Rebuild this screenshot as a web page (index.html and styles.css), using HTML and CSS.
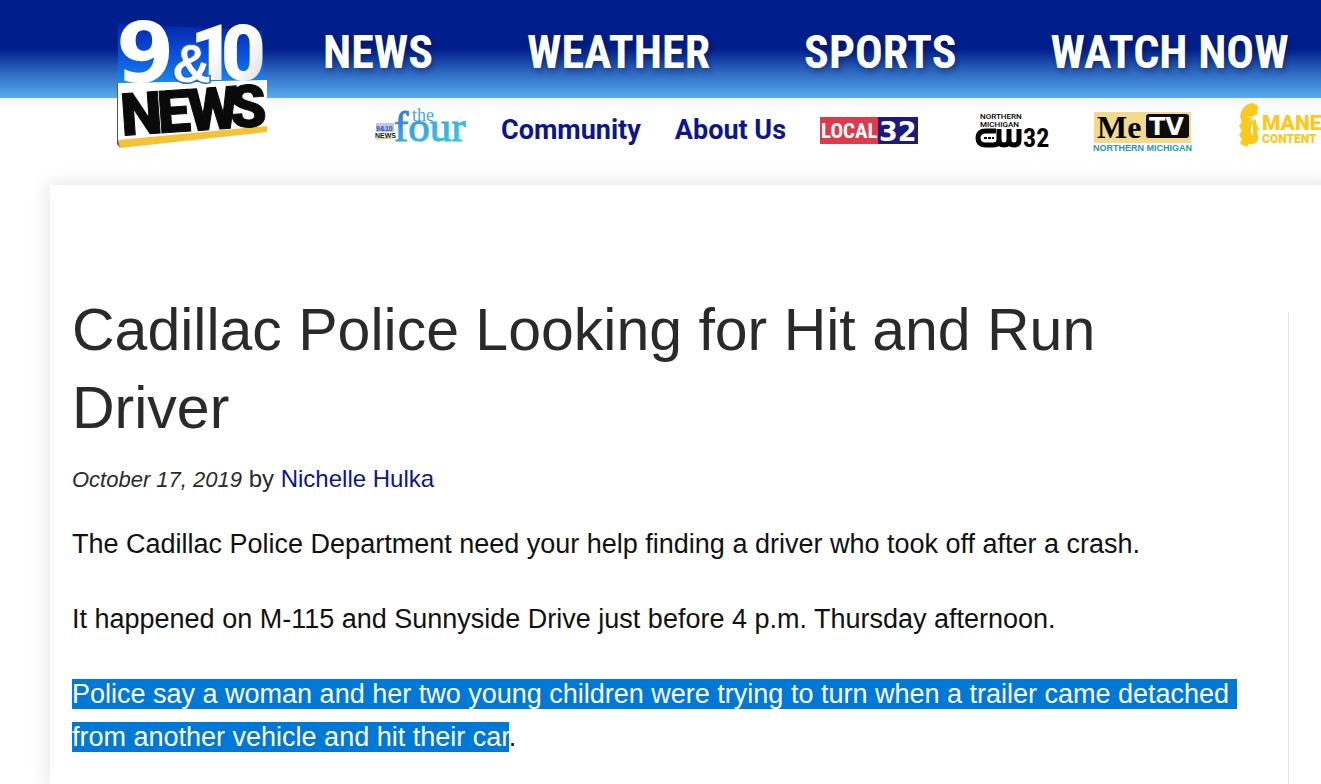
FILE: index.html
```html
<!DOCTYPE html>
<html lang="en">
<head>
    <meta charset="UTF-8" />
    <title>Cadillac Police Looking for Hit and Run Driver</title>
    <link rel="stylesheet" href="styles.css">
</head>
<body>
    <header class="topbar">
      <a href="#" class="logo" aria-label="9&amp;10 News">
        <svg width="154" height="136" viewBox="0 0 154 136">
          <defs>
            <linearGradient id="panel" x1="0" y1="0" x2="0" y2="1">
              <stop offset="0" stop-color="#0526a8" />
              <stop offset="0.5" stop-color="#0a50dc" />
              <stop offset="1" stop-color="#1a94ee" />
            </linearGradient>
            <linearGradient id="chrome" x1="0" y1="0" x2="1" y2="1">
              <stop offset="0.5" stop-color="#ffffff" />
              <stop offset="1" stop-color="#cfcfd4" />
            </linearGradient>
          </defs>
          <path d="M2 8 L146 16 L148 68 L2 72 Z" fill="url(#panel)" />
          <path d="M2 68 L151 65 L151 112 L2 126 Z" fill="#ffffff" />
          <path d="M2 125 L151 111 L151 117 L4 133 L2 129 Z" fill="#f5c235" />
          <path d="M1 68 L2 68 L2 126 L4 133 L1 129 Z" fill="#55565c" />
          <g class="logo-num">
            <text x="0" y="67" class="nine" fill="#ffffff">9</text>
            <text x="74" y="65" class="ten" fill="url(#chrome)">1</text>
            <text x="105" y="65" class="ten" fill="url(#chrome)">0</text>
            <text x="56" y="67" font-size="54" fill="#ffffff" stroke="#1663d8" stroke-width="3" paint-order="stroke">&amp;</text>
          </g>
          <g class="logo-news" transform="rotate(-4 4 122)">
            <text x="6 43 73 115" y="121">NEWS</text>
          </g>
        </svg>
      </a>
      <nav class="topnav">
        <a href="#">NEWS</a>
        <a href="#">WEATHER</a>
        <a href="#">SPORTS</a>
        <a href="#">WATCH NOW</a>
      </nav>
    </header>

    <nav class="subnav">
      <a href="#" aria-label="the four">
        <svg width="93" height="44" viewBox="0 0 93 44">
          <defs>
            <linearGradient id="four" x1="0" y1="0" x2="1" y2="1">
              <stop offset="0" stop-color="#2a63d8" />
              <stop offset="0.4" stop-color="#35a4e4" />
              <stop offset="1" stop-color="#35d0e6" />
            </linearGradient>
          </defs>
          <rect x="2" y="19" width="18" height="9" fill="#b9c8ee" />
          <text x="2" y="27" class="tiny" fill="#3a50a8">9&amp;10</text>
          <text x="1" y="34" class="tiny" fill="#111111">NEWS</text>
          <path d="M2 35 L19 34" stroke="#e9c04a" />
          <text x="20" y="37" class="four" fill="url(#four)" stroke="url(#four)">four</text>
          <text x="38" y="17" class="the" fill="#3fa9dd">the</text>
        </svg>
      </a>
      <a href="#">Community</a>
      <a href="#">About Us</a>
      <a href="#" aria-label="Local 32">
        <svg width="98" height="44" viewBox="0 0 98 44">
          <rect x="0" y="13" width="58" height="27" fill="#e0394b" />
          <rect x="58" y="13" width="40" height="27" fill="#1c1a80" />
          <text x="1" y="34" class="local">LOCAL</text>
          <text x="59" y="37" class="local-num">32</text>
        </svg>
      </a>
      <a href="#" class="cw" aria-label="Northern Michigan CW 32">
        <svg width="74" height="44" viewBox="0 0 74 44">
          <text x="4" y="15" class="north">NORTHERN</text>
          <text x="4" y="23" class="north">MICHIGAN</text>
          <g fill="none" stroke="#000000" stroke-width="5">
            <path d="M20 27 H10 Q2 27 2 34 Q2 41 10 41 H17 Q23 41 23 36 V25" />
            <path d="M23 36 Q23 41 28 41 Q33 41 33 36 V25 M33 36 Q33 41 38 41 Q43 41 43 36 V25" />
          </g>
          <path d="M8 34 H18" stroke="#000000" stroke-width="2" stroke-dasharray="3 1" />
          <text x="47" y="43" class="cw-num">32</text>
        </svg>
      </a>
      <a href="#" class="metv" aria-label="MeTV Northern Michigan">
        <svg width="100" height="48" viewBox="0 0 100 48">
          <rect x="1" y="8" width="97" height="31" fill="#f2d98b" />
          <rect x="53" y="10" width="43" height="24" rx="3" fill="#0d0d0d" />
          <text x="4" y="34" class="me">Me</text>
          <text x="56" y="31" class="tv">TV</text>
          <text x="0" y="47" class="metv-sub">NORTHERN MICHIGAN</text>
        </svg>
      </a>
      <a href="#" class="mane" aria-label="Mane Content">
        <svg width="100" height="48" viewBox="0 0 100 48">
          <path d="M2 8 Q6 -1 14 -1 L19 2 L18 10 L13 13 L14 19 L12 24 L13 31 L19 31 L19 36 Q17 41 10 40 L8 43 L1 40 L3 35 L0 31 L3 27 L0 22 L3 18 L1 13 Z" fill="#fbc91c" />
          <path d="M14 17 L17 15 L17 19 L20 25 L18 27 L19 32 L14 31 Z" fill="#fbc91c" />
          <path d="M8 12 L13 14 L10 18 M13 20 L12 28" fill="none" stroke="#fff1b8" stroke-width="1" />
          <text x="23" y="26" class="mane-big">MANE</text>
          <text x="23" y="39" class="mane-small">CONTENT</text>
        </svg>
      </a>
    </nav>

    <main class="page">
      <article class="story">
        <h1>Cadillac Police Looking for Hit and Run Driver</h1>
        <p class="byline"><em>October 17, 2019</em> by <a href="#">Nichelle Hulka</a></p>
        <p>The Cadillac Police Department need your help finding a driver who took off after a crash.</p>
        <p>It happened on M-115 and Sunnyside Drive just before 4 p.m. Thursday afternoon.</p>
        <p><mark>Police say a woman and her two young children were trying to turn when a trailer came detached&nbsp;</mark><br><mark>from another vehicle and hit their car</mark>.</p>
      </article>
      <aside class="sidebar"></aside>
    </main>
</body>
</html>
```
FILE: styles.css
```css
body {
  display: flex;
  flex-direction: column;
  min-height: 100vh;
  margin: 0;
  background-color: #ffffff;
  font-family: "Liberation Sans", Arial, sans-serif;
  color: #111111;
  overflow-x: hidden;
}

a {
  color: #0c1590;
  text-decoration: none;
}

/* Blue bar on top */
.topbar {
  display: flex;
  height: 98px;
  padding-left: 116px;
  background: linear-gradient(#001f8c 50%, #2a63bd 72%, #5aabf2);
}

.logo {
  flex: none;
  height: 136px;
  margin-top: 15px;
  z-index: 1;
}

.logo svg {
  overflow: visible;
}

.logo-num {
  font-family: "Liberation Sans", Arial, sans-serif;
  font-weight: bold;
}

.nine {
  font: bold 84px "DejaVu Sans", sans-serif;
}

.ten {
  font: 900 77px Roboto, sans-serif;
}

.logo-news {
  font-family: Roboto, sans-serif;
  font-size: 59px;
  font-weight: 900;
  fill: #0a0a0a;
  stroke: #0a0a0a;
  stroke-width: 1px;
}

.topnav {
  display: flex;
  gap: 94px;
  margin-left: 53px;
  padding-top: 20px;
}

.topnav a {
  color: #ffffff;
  font-family: "Roboto Condensed", Roboto, sans-serif;
  font-size: 46px;
  font-weight: bold;
  line-height: 64px;
  white-space: nowrap;
  text-shadow: 2px 3px 6px rgba(0, 0, 0, 0.3);
}

/* Second row of links */
.subnav {
  display: flex;
  align-items: flex-start;
  gap: 34px;
  height: 87px;
  padding-left: 374px;
  background: linear-gradient(#f4f8fc, #ffffff 16px);
}

.subnav a {
  flex: none;
  padding-top: 6px;
  font-family: Roboto, sans-serif;
  font-size: 27px;
  font-weight: bold;
  line-height: 52px;
}

.subnav svg {
  display: block;
  overflow: visible;
}

.subnav .cw {
  margin-left: 24px;
}

.subnav .metv {
  margin-left: 9px;
}

.subnav .mane {
  margin-left: 12px;
}

.tiny {
  font: bold 7px "Liberation Sans", Arial, sans-serif;
}

.four {
  font: 43px "Liberation Serif", serif;
}

.the {
  font: 18px "Liberation Serif", serif;
}

.local {
  font: bold 21px "Roboto Condensed", Roboto, sans-serif;
  fill: #ffffff;
}

.local-num {
  font: bold 27px "DejaVu Sans", sans-serif;
  fill: #ffffff;
}

.north {
  font: 500 8px Roboto, sans-serif;
}

.cw-num {
  font: bold 26px "Roboto Condensed", Roboto, sans-serif;
}

.me {
  font: bold 32px "Liberation Serif", serif;
}

.tv {
  font: bold 24px "DejaVu Sans", sans-serif;
  fill: #ffffff;
}

.metv-sub {
  font: bold 9px "Liberation Sans", Arial, sans-serif;
  fill: #2496b4;
}

.mane-big {
  font: 900 21px Roboto, sans-serif;
  fill: #fbc91c;
}

.mane-small {
  font: 900 12px Roboto, sans-serif;
  fill: #fbc91c;
}

/* Article */
.page {
  display: flex;
  flex: 1;
  margin-left: 50px;
  margin-right: -20px;
  padding-left: 22px;
  padding-right: 20px;
  background-color: #ffffff;
  box-shadow: 0 0 20px rgba(0, 0, 0, 0.13);
}

.story {
  flex: 1;
  padding-top: 106px;
  padding-right: 40px;
}

.story h1 {
  margin: 0;
  color: #2a2a2a;
  font-size: 59px;
  font-weight: normal;
  line-height: 78px;
}

.story p {
  margin: 0 0 32px;
  font-size: 27px;
  line-height: 43px;
}

.story .byline {
  margin: 10px 0 22px;
  color: #2a2a2a;
  font-size: 24px;
}

.story p:last-child {
  margin-bottom: 0;
}

.byline em {
  font-size: 22px;
}

mark {
  background-color: #0078d7;
  color: #ffffff;
}

.sidebar {
  width: 32px;
  margin-top: 127px;
  border-left: 1px solid #e6e6e6;
}
```
